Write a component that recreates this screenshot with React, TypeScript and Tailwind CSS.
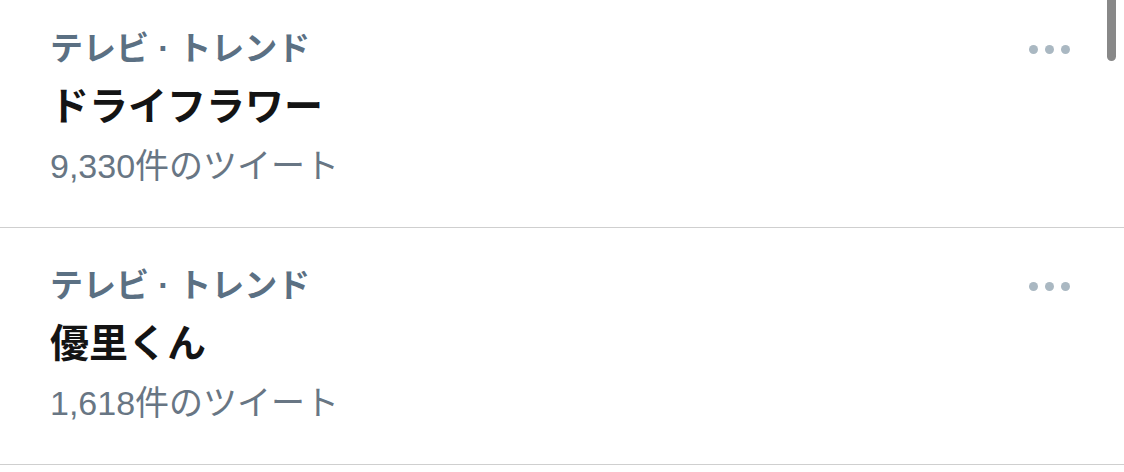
import React from "react";

interface Trend {
  category: string;
  title: string;
  count: string;
}

const trends: Trend[] = [
  { category: "テレビ · トレンド", title: "ドライフラワー", count: "9,330件のツイート" },
  { category: "テレビ · トレンド", title: "優里くん", count: "1,618件のツイート" },
];

const MoreDots: React.FC = () => (
  <div className="self-start flex items-center gap-[7px] h-[58px]">
    <span className="block w-[9px] h-[9px] rounded-full bg-[#aab8c2]"></span>
    <span className="block w-[9px] h-[9px] rounded-full bg-[#aab8c2]"></span>
    <span className="block w-[9px] h-[9px] rounded-full bg-[#aab8c2]"></span>
  </div>
);

const TrendRow: React.FC<{ trend: Trend }> = ({ trend }) => (
  <div className="flex justify-between pl-[50px] pr-[54px] pt-[29px] h-[237px] border-b border-[#cfcfcf]">
    <div className="flex flex-col">
      <div className="text-[33px] leading-[58px] font-semibold text-[#5b7083]">
        {trend.category}
      </div>
      <div className="text-[39px] leading-[58px] font-bold text-[#141414]">
        {trend.title}
      </div>
      <div className="text-[34px] leading-[60px] text-[#687684]">
        {trend.count}
      </div>
    </div>
    <MoreDots />
  </div>
);

export default function App() {
  return (
    <div
      className="relative w-[1124px] h-[472px] overflow-hidden bg-white"
      style={{ fontFamily: '"Liberation Sans", "Noto Sans CJK JP", sans-serif' }}
    >
      <div className="-mt-[9px]">
        {trends.map((t, i) => (
          <TrendRow key={i} trend={t} />
        ))}
      </div>
      <div className="absolute left-[1107px] top-[-12px] w-[9px] h-[73px] rounded-full bg-[#888888]"></div>
    </div>
  );
}
